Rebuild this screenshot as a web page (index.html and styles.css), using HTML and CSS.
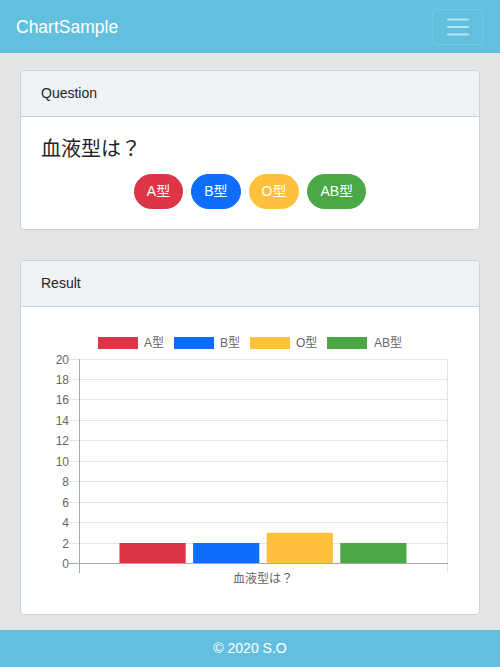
FILE: index.html
```
<!DOCTYPE html>
<html lang="ja">
<head>
<meta charset="utf-8">
<title>ChartSample</title>
<link rel="stylesheet" href="styles.css">
</head>
<body>
<nav class="navbar">
  <span class="brand">ChartSample</span>
  <button class="toggler" type="button" aria-label="Toggle navigation">
    <svg class="toggler-icon" viewBox="0 0 30 30" width="28" height="28"><path d="M4 7h22M4 15h22M4 23h22" stroke="rgba(255,255,255,0.55)" stroke-width="2" stroke-linecap="round"/></svg>
  </button>
</nav>
<main class="main">
  <section class="card">
    <div class="card-header">Question</div>
    <div class="card-body">
      <h5 class="question">血液型は？</h5>
      <div class="choices">
        <button class="btn btn-a">A型</button>
        <button class="btn btn-b">B型</button>
        <button class="btn btn-o">O型</button>
        <button class="btn btn-ab">AB型</button>
      </div>
    </div>
  </section>
  <section class="card">
    <div class="card-header">Result</div>
    <div class="card-body">
      <svg class="chart" viewBox="0 0 418 267" width="418" height="267">
        <g class="legend">
          <rect x="57" y="10" width="40" height="12" fill="#dc3545"/>
          <text x="103" y="16">A型</text>
          <rect x="133" y="10" width="40" height="12" fill="#0d6efd"/>
          <text x="179" y="16">B型</text>
          <rect x="209" y="10" width="40" height="12" fill="#ffc13b"/>
          <text x="255" y="16">O型</text>
          <rect x="286" y="10" width="40" height="12" fill="#4aa846"/>
          <text x="333" y="16">AB型</text>
        </g>
        <g class="grid">
          <line x1="28" x2="407" y1="32.5" y2="32.5"/>
          <line x1="28" x2="407" y1="52.5" y2="52.5"/>
          <line x1="28" x2="407" y1="72.5" y2="72.5"/>
          <line x1="28" x2="407" y1="93.5" y2="93.5"/>
          <line x1="28" x2="407" y1="113.5" y2="113.5"/>
          <line x1="28" x2="407" y1="134.5" y2="134.5"/>
          <line x1="28" x2="407" y1="154.5" y2="154.5"/>
          <line x1="28" x2="407" y1="175.5" y2="175.5"/>
          <line x1="28" x2="407" y1="195.5" y2="195.5"/>
          <line x1="28" x2="407" y1="216.5" y2="216.5"/>
          <line x1="406.5" x2="406.5" y1="32" y2="246"/>
        </g>
        <g class="ticks">
          <text x="28" y="32.5">20</text>
          <text x="28" y="52.5">18</text>
          <text x="28" y="72.5">16</text>
          <text x="28" y="93.5">14</text>
          <text x="28" y="113.5">12</text>
          <text x="28" y="134.5">10</text>
          <text x="28" y="154.5">8</text>
          <text x="28" y="175.5">6</text>
          <text x="28" y="195.5">4</text>
          <text x="28" y="216.5">2</text>
          <text x="28" y="236.5">0</text>
        </g>
        <g class="bars">
          <rect x="78.5" y="216" width="66.2" height="20.5" fill="#dc3545"/>
          <rect x="152.1" y="216" width="66.2" height="20.5" fill="#0d6efd"/>
          <rect x="225.7" y="205.8" width="66.2" height="30.7" fill="#ffc13b"/>
          <rect x="299.3" y="216" width="66.2" height="20.5" fill="#4aa846"/>
        </g>
        <g class="axis">
          <line x1="28" x2="407" y1="236.5" y2="236.5"/>
          <line x1="38.5" x2="38.5" y1="32" y2="246"/>
        </g>
        <text class="xlabel" x="222" y="252">血液型は？</text>
      </svg>
    </div>
  </section>
</main>
<footer class="footer">© 2020 S.O</footer>
</body>
</html>
```

FILE: styles.css
```
* { box-sizing: border-box; }
html, body { margin: 0; padding: 0; }
body {
  font-family: "Liberation Sans", "Noto Sans CJK JP", sans-serif;
  background: #e3e4e6;
  color: #212529;
  font-size: 14px;
  line-height: 1.5;
}
.navbar {
  height: 53px;
  background: #62c0de;
  display: flex;
  align-items: center;
  justify-content: space-between;
  padding: 0 17px 0 16px;
}
.brand {
  color: #fff;
  font-size: 17.5px;
  line-height: 24px;
}
.toggler {
  width: 51px;
  height: 36px;
  border: 1px solid rgba(255, 255, 255, 0.12);
  border-radius: 4px;
  background: transparent;
  padding: 0;
  display: flex;
  align-items: center;
  justify-content: center;
}
.toggler-icon { display: block; }
.main {
  padding: 17px 20px 15px;
  display: flex;
  flex-direction: column;
  gap: 30px;
}
.card {
  background: #fff;
  border: 1px solid #c7d2da;
  border-radius: 4px;
  overflow: hidden;
}
.card-header {
  background: #eef2f5;
  border-bottom: 1px solid #c7d2da;
  padding: 12px 20px;
  font-size: 14px;
  line-height: 21px;
}
.card-body { padding: 20px; }
.question {
  margin: 0 0 13px;
  font-size: 20px;
  line-height: 24px;
  font-weight: 400;
}
.choices {
  display: flex;
  justify-content: center;
  gap: 8px;
}
.btn {
  font-family: inherit;
  font-size: 14px;
  line-height: 21px;
  padding: 6px 12px;
  border: 1px solid transparent;
  border-radius: 18px;
  color: #fff;
}
.btn-a { background: #dc3545; border-color: #dc3545; }
.btn-b { background: #0d6efd; border-color: #0d6efd; }
.btn-o { background: #ffc13b; border-color: #ffc13b; }
.btn-ab { background: #4aa846; border-color: #4aa846; }
.chart {
  display: block;
  font-family: "Liberation Sans", "Noto Sans CJK JP", sans-serif;
}
.legend text, .xlabel {
  font-size: 12px;
  fill: #666;
  dominant-baseline: central;
}
.xlabel { text-anchor: middle; }
.ticks text {
  font-size: 12px;
  fill: #666;
  text-anchor: end;
  dominant-baseline: central;
}
.grid line { stroke: #e5e5e5; stroke-width: 1; }
.axis line { stroke: #a8a8a8; stroke-width: 1; }
.footer {
  background: #62c0de;
  color: #fff;
  text-align: center;
  padding: 8px;
  line-height: 21px;
}
```
